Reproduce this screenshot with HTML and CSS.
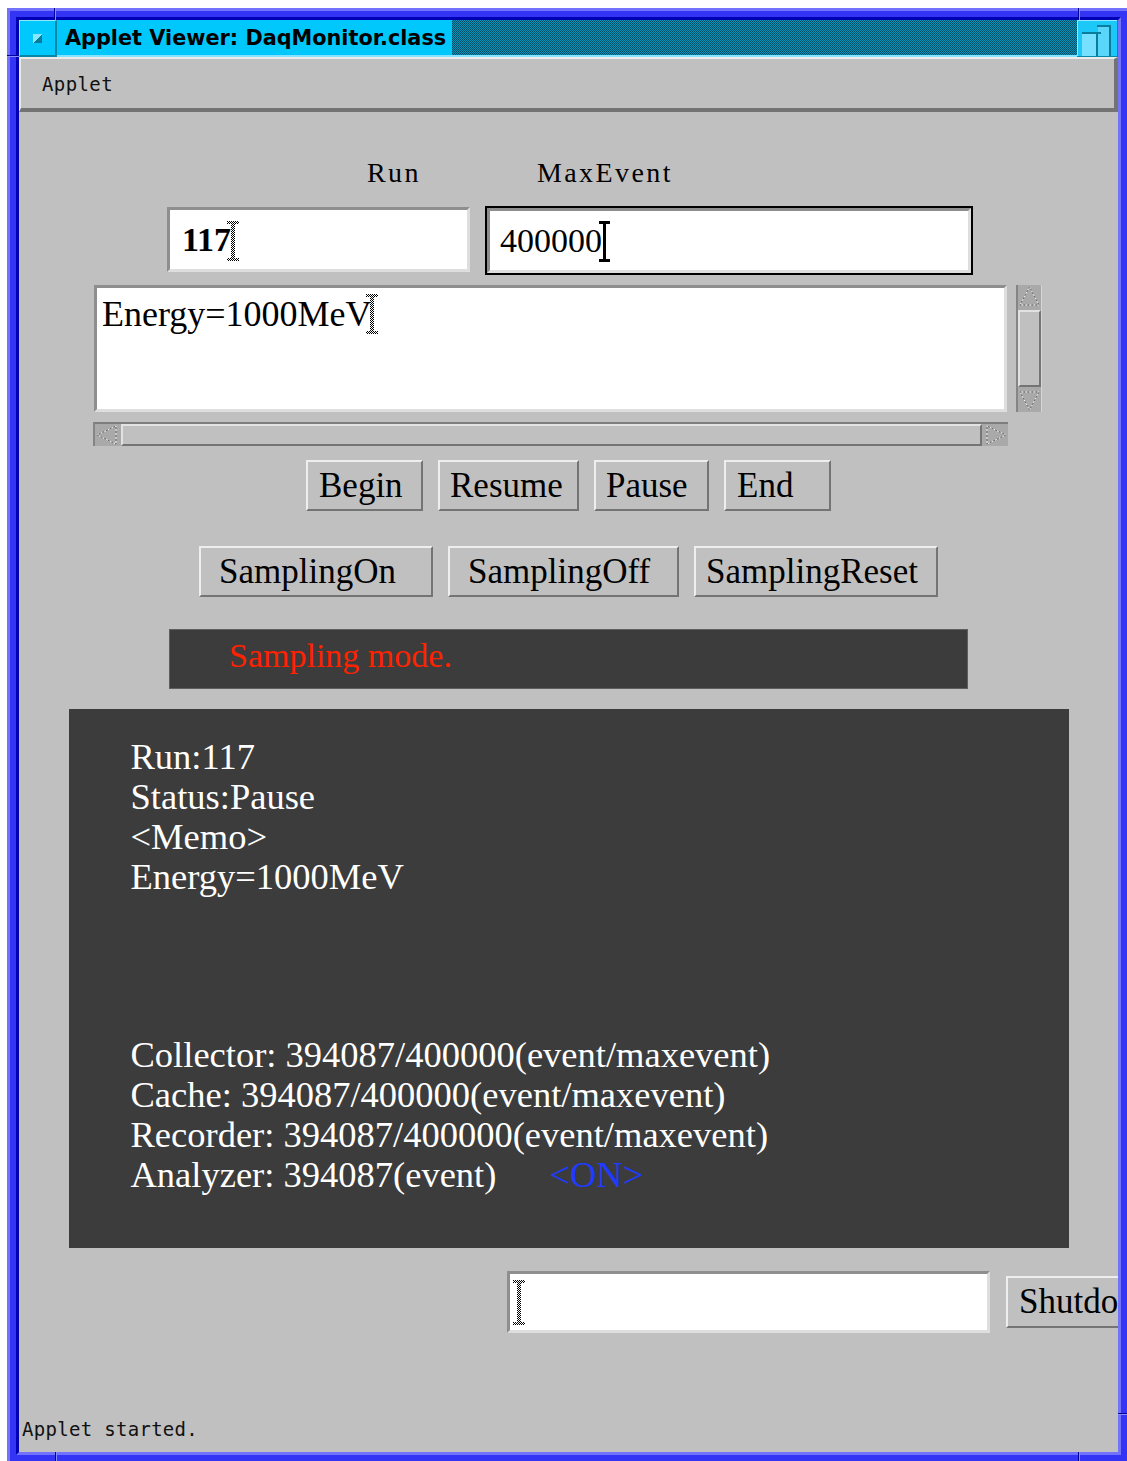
FILE: index.html
```html
<!DOCTYPE html>
<html lang="en">
<head>
<meta charset="utf-8">
<title>Applet Viewer: DaqMonitor.class</title>
<link rel="stylesheet" href="styles.css">
</head>
<body>
<svg class="defs" width="0" height="0" aria-hidden="true">
  <defs>
    <pattern id="chk" width="2" height="2" patternUnits="userSpaceOnUse">
      <rect width="2" height="2" fill="#ffffff"/>
      <rect width="1" height="1" fill="#000000"/>
      <rect x="1" y="1" width="1" height="1" fill="#000000"/>
    </pattern>
  </defs>
</svg>

<div class="win">
  <span class="notch notch-top-l"></span>
  <span class="notch notch-top-r"></span>
  <span class="notch notch-bot-l"></span>
  <span class="notch notch-bot-r"></span>
  <span class="notch-h notch-left"></span>
  <span class="notch-h notch-right"></span>

  <div class="frame-in">
    <div class="titlebar">
      <div class="tb-menu"><span class="tb-menu-icon"></span></div>
      <div class="tb-title">
        <span class="tb-text">Applet Viewer: DaqMonitor.class</span>
        <span class="tb-fill"></span>
      </div>
      <div class="tb-max">
        <svg width="41" height="37" viewBox="0 0 41 37">
          <rect width="41" height="37" fill="#1cc8f8"/>
          <path d="M0 0.5H41M0.5 0V37" stroke="#8fe9ff"/>
          <path d="M0 36.5H41M40.5 0V37" stroke="#0a86a6"/>
          <rect x="5" y="14" width="14" height="22" fill="#78e0ff"/>
          <rect x="21" y="7" width="11" height="29" fill="#5ad6fb"/>
          <path d="M5 13H24M20 14V36M33 5V36M20 6H33" stroke="#0a7c9c" stroke-width="2"/>
        </svg>
      </div>
    </div>

    <div class="menubar"><span class="menu-item">Applet</span></div>

    <div class="content">
      <div class="labels">
        <span class="lbl lbl-run">Run</span>
        <span class="lbl">MaxEvent</span>
      </div>

      <div class="fields">
        <div class="field field-run">
          <span>117</span>
          <svg class="ibeam" width="12" height="40" viewBox="0 0 12 40"><path d="M0 0h12v3H8v34h4v3H0v-3h4V3H0z" fill="url(#chk)"/></svg>
        </div>
        <div class="field field-max">
          <span>400000</span>
          <svg class="ibeam ibeam-solid" width="11" height="41" viewBox="0 0 11 41"><path d="M0 0h11v3H7v35h4v3H0v-3h4V3H0z" fill="#000"/></svg>
        </div>
      </div>

      <div class="memo-row">
        <div class="memo">
          <span>Energy=1000MeV</span><svg class="ibeam" width="12" height="40" viewBox="0 0 12 40"><path d="M0 0h12v3H8v34h4v3H0v-3h4V3H0z" fill="url(#chk)"/></svg>
        </div>
        <div class="vscroll">
          <svg class="arrow-v" width="23" height="22" viewBox="0 0 23 22">
            <path d="M11.5 2L21 20H2Z" fill="none" stroke="#f0f0f0" stroke-dasharray="2 2"/>
            <path d="M11.5 2L21 20H2Z" fill="none" stroke="#6a6a6a" stroke-dasharray="2 2" stroke-dashoffset="2"/>
          </svg>
          <div class="v-thumb"></div>
          <svg class="arrow-v" width="23" height="22" viewBox="0 0 23 22">
            <path d="M11.5 20L21 2H2Z" fill="none" stroke="#f0f0f0" stroke-dasharray="2 2"/>
            <path d="M11.5 20L21 2H2Z" fill="none" stroke="#6a6a6a" stroke-dasharray="2 2" stroke-dashoffset="2"/>
          </svg>
        </div>
      </div>

      <div class="hscroll">
        <svg class="arrow-h" width="24" height="22" viewBox="0 0 24 22">
          <path d="M2 11L21 2V20Z" fill="none" stroke="#f0f0f0" stroke-dasharray="2 2"/>
          <path d="M2 11L21 2V20Z" fill="none" stroke="#6a6a6a" stroke-dasharray="2 2" stroke-dashoffset="2"/>
        </svg>
        <div class="h-thumb"></div>
        <svg class="arrow-h" width="24" height="22" viewBox="0 0 24 22">
          <path d="M22 11L3 2V20Z" fill="none" stroke="#f0f0f0" stroke-dasharray="2 2"/>
          <path d="M22 11L3 2V20Z" fill="none" stroke="#6a6a6a" stroke-dasharray="2 2" stroke-dashoffset="2"/>
        </svg>
      </div>

      <div class="btn-row row1">
        <div class="btn b-begin">Begin</div>
        <div class="btn b-resume">Resume</div>
        <div class="btn b-pause">Pause</div>
        <div class="btn b-end">End</div>
      </div>

      <div class="btn-row row2">
        <div class="btn b-son">SamplingOn</div>
        <div class="btn b-soff">SamplingOff</div>
        <div class="btn b-sreset">SamplingReset</div>
      </div>

      <div class="status-bar"><span class="status-text">Sampling mode.</span></div>

      <div class="panel">
        <div class="panel-block">
          <div class="pline">Run:117</div>
          <div class="pline">Status:Pause</div>
          <div class="pline">&lt;Memo&gt;</div>
          <div class="pline">Energy=1000MeV</div>
        </div>
        <div class="panel-block counters">
          <div class="pline">Collector: 394087/400000(event/maxevent)</div>
          <div class="pline">Cache: 394087/400000(event/maxevent)</div>
          <div class="pline">Recorder: 394087/400000(event/maxevent)</div>
          <div class="pline">Analyzer: 394087(event)<span class="on-flag">&lt;ON&gt;</span></div>
        </div>
      </div>

      <div class="cmd-row">
        <div class="field field-cmd">
          <svg class="ibeam ibeam-tall" width="12" height="45" viewBox="0 0 12 45"><path d="M0 0h12v3H8v39h4v3H0v-3h4V3H0z" fill="url(#chk)"/></svg>
        </div>
        <div class="btn b-shut">Shutdown</div>
      </div>

      <div class="applet-status">Applet started.</div>
    </div>
  </div>
</div>
</body>
</html>
```

FILE: styles.css
```css
html, body {
  margin: 0;
  padding: 0;
  overflow: hidden;
  background: #ffffff;
}

body {
  width: 1127px;
  height: 1461px;
}

.defs {
  position: absolute;
  width: 0;
  height: 0;
}

/* ---------- window frame (Motif style, three-tone blue) ---------- */
.win {
  position: relative;
  box-sizing: border-box;
  width: 1123px;
  height: 1456px;
  margin: 8px 0 0 7px;
  border: 3px solid;
  border-color: #7272ff #0000b4 #0000b4 #7272ff;
  background: #3434f4;
  padding: 6px;
}

.frame-in {
  box-sizing: border-box;
  height: 100%;
  border: 3px solid;
  border-color: #0000b4 #7272ff #7272ff #0000b4;
  background: #c0c0c0;
  display: flex;
  flex-direction: column;
  overflow: hidden;
}

/* resize-handle ticks on the frame */
.notch {
  position: absolute;
  width: 2px;
  height: 12px;
  background: linear-gradient(90deg, #00009a 50%, #8a8aff 50%);
}
.notch-top-l { left: 44px; top: -3px; }
.notch-top-r { left: 1068px; top: -3px; }
.notch-bot-l { left: 45px; bottom: -3px; }
.notch-bot-r { left: 1068px; bottom: -3px; }

.notch-h {
  position: absolute;
  width: 12px;
  height: 2px;
  background: linear-gradient(180deg, #00009a 50%, #8a8aff 50%);
}
.notch-left { left: -3px; top: 44px; }
.notch-right { right: -3px; top: 1402px; }

/* ---------- title bar ---------- */
.titlebar {
  display: flex;
  height: 37px;
  flex-shrink: 0;
}

.tb-menu {
  width: 38px;
  box-sizing: border-box;
  background: #00c8fc;
  border-top: 1px solid #8fe9ff;
  border-left: 1px solid #8fe9ff;
  border-right: 2px solid #0a86a6;
  border-bottom: 2px solid #0a86a6;
  display: flex;
  align-items: center;
  justify-content: center;
}

.tb-menu-icon {
  width: 9px;
  height: 9px;
  background: linear-gradient(135deg, #8ae6ff 0 50%, #0a7c9c 50% 100%);
}

.tb-title {
  flex: 1;
  display: flex;
  box-sizing: border-box;
  border-bottom: 2px solid #86e2ff;
}

.tb-text {
  background: #00c8fc;
  padding: 0 6px 0 8px;
  font: bold 20.8px "DejaVu Sans", sans-serif;
  color: #000000;
  display: flex;
  align-items: center;
  white-space: nowrap;
}

.tb-fill {
  flex: 1;
  background: repeating-conic-gradient(#00506c 0 25%, #0892b6 0 50%) 0 0 / 2px 2px;
}

.tb-max {
  width: 41px;
  height: 37px;
  flex-shrink: 0;
}

.tb-max svg {
  display: block;
}

/* ---------- menu bar ---------- */
.menubar {
  height: 55px;
  flex-shrink: 0;
  box-sizing: border-box;
  border-style: solid;
  border-width: 2px 4px 4px 2px;
  border-color: #ebebeb #737373 #737373 #ebebeb;
  display: flex;
  align-items: center;
  padding-left: 21px;
  font: 19px "DejaVu Sans Mono", monospace;
  letter-spacing: 0.4px;
  color: #111111;
}

/* ---------- applet area ---------- */
.content {
  flex: 1;
  display: flex;
  flex-direction: column;
  align-items: flex-start;
  overflow: hidden;
  font-family: "Liberation Serif", "Times New Roman", serif;
  color: #000000;
}

.labels {
  display: flex;
  align-items: center;
  height: 40px;
  margin: 41px 0 0 348px;
  font-size: 28px;
  letter-spacing: 2.4px;
}

.lbl-run {
  width: 170px;
}

.fields {
  display: flex;
  align-items: flex-start;
  height: 69px;
  margin: 13px 0 0 148px;
}

.field {
  box-sizing: border-box;
  background: #ffffff;
  border: 3px solid;
  border-color: #8e8e8e #dedede #dedede #8e8e8e;
  display: flex;
  align-items: center;
  font-size: 34px;
}

.field-run {
  width: 303px;
  height: 65px;
  margin-top: 1px;
  padding-left: 12px;
  font-weight: bold;
}

.field-max {
  width: 484px;
  height: 65px;
  margin: 2px 0 0 17px;
  padding-left: 10px;
  outline: 2px solid #000000;
}

.ibeam {
  display: inline-block;
  flex-shrink: 0;
  margin-left: -4px;
  margin-top: 2px;
}

.ibeam-solid {
  margin-left: -3px;
}

.memo-row {
  display: flex;
  height: 127px;
  margin: 10px 0 0 75px;
}

.memo {
  width: 913px;
  box-sizing: border-box;
  background: #ffffff;
  border: 3px solid;
  border-color: #8e8e8e #dedede #dedede #8e8e8e;
  padding: 6px 0 0 5px;
  font-size: 36px;
  line-height: 40px;
  display: flex;
  align-items: flex-start;
}

.memo .ibeam {
  margin-top: 0;
  margin-left: -6px;
}

.vscroll {
  width: 26px;
  margin-left: 9px;
  box-sizing: border-box;
  background: #a9a9a9;
  border-left: 2px solid #858585;
  border-right: 1px solid #d6d6d6;
  display: flex;
  flex-direction: column;
}

.arrow-v {
  display: block;
  flex-shrink: 0;
}

.v-thumb {
  flex: 1;
  margin: 3px 0;
  background: #c0c0c0;
  border: 2px solid;
  border-color: #e2e2e2 #747474 #747474 #e2e2e2;
}

.hscroll {
  display: flex;
  align-items: center;
  width: 915px;
  height: 24px;
  box-sizing: border-box;
  margin: 10px 0 0 74px;
  background: #a9a9a9;
  border-top: 2px solid #7d7d7d;
  border-left: 2px solid #858585;
}

.arrow-h {
  display: block;
  flex-shrink: 0;
}

.h-thumb {
  flex: 1;
  height: 100%;
  box-sizing: border-box;
  margin: 0 2px;
  background: #c0c0c0;
  border: 2px solid;
  border-color: #e2e2e2 #747474 #747474 #e2e2e2;
}

/* ---------- push buttons ---------- */
.btn-row {
  display: flex;
  gap: 15px;
  align-self: center;
}

.row1 { margin-top: 14px; }
.row2 { margin-top: 35px; }

.btn {
  box-sizing: border-box;
  height: 51px;
  border: 2px solid;
  border-color: #eeeeee #747474 #747474 #eeeeee;
  background: #c0c0c0;
  display: flex;
  align-items: center;
  font-size: 35px;
  padding-left: 11px;
  white-space: nowrap;
  flex-shrink: 0;
}

.b-begin { width: 117px; }
.b-resume { width: 141px; padding-left: 10px; }
.b-pause { width: 115px; padding-left: 10px; }
.b-end { width: 107px; }
.b-son { width: 234px; padding-left: 18px; }
.b-soff { width: 231px; padding-left: 18px; }
.b-sreset { width: 244px; padding-left: 10px; }

/* ---------- status line ---------- */
.status-bar {
  align-self: center;
  width: 799px;
  height: 60px;
  box-sizing: border-box;
  margin-top: 32px;
  background: #3c3c3c;
  border: 1px solid #5e5e5e;
  display: flex;
  align-items: center;
  padding: 0 0 6px 59px;
}

.status-text {
  color: #ff2200;
  font-size: 34px;
}

/* ---------- monitor panel ---------- */
.panel {
  align-self: center;
  width: 1000px;
  height: 539px;
  box-sizing: border-box;
  margin-top: 20px;
  background: #3c3c3c;
  padding: 28px 0 0 62px;
  color: #ffffff;
  font-size: 36.5px;
  line-height: 40px;
}

.pline {
  white-space: nowrap;
}

.counters {
  margin-top: 138px;
}

.on-flag {
  color: #1f3bff;
  margin-left: 53px;
}

/* ---------- command entry ---------- */
.cmd-row {
  display: flex;
  align-items: flex-start;
  margin: 23px 0 0 488px;
}

.field-cmd {
  width: 483px;
  height: 62px;
  padding-left: 3px;
}

.ibeam-tall {
  margin-left: 0;
  margin-top: 0;
}

.b-shut {
  height: 52px;
  width: 160px;
  margin: 5px 0 0 16px;
  padding-left: 11px;
}

/* ---------- viewer status ---------- */
.applet-status {
  margin-top: auto;
  padding: 0 0 11px 3px;
  line-height: 24px;
  font: 19px/24px "DejaVu Sans Mono", monospace;
  letter-spacing: 0.3px;
  color: #111111;
}
```
